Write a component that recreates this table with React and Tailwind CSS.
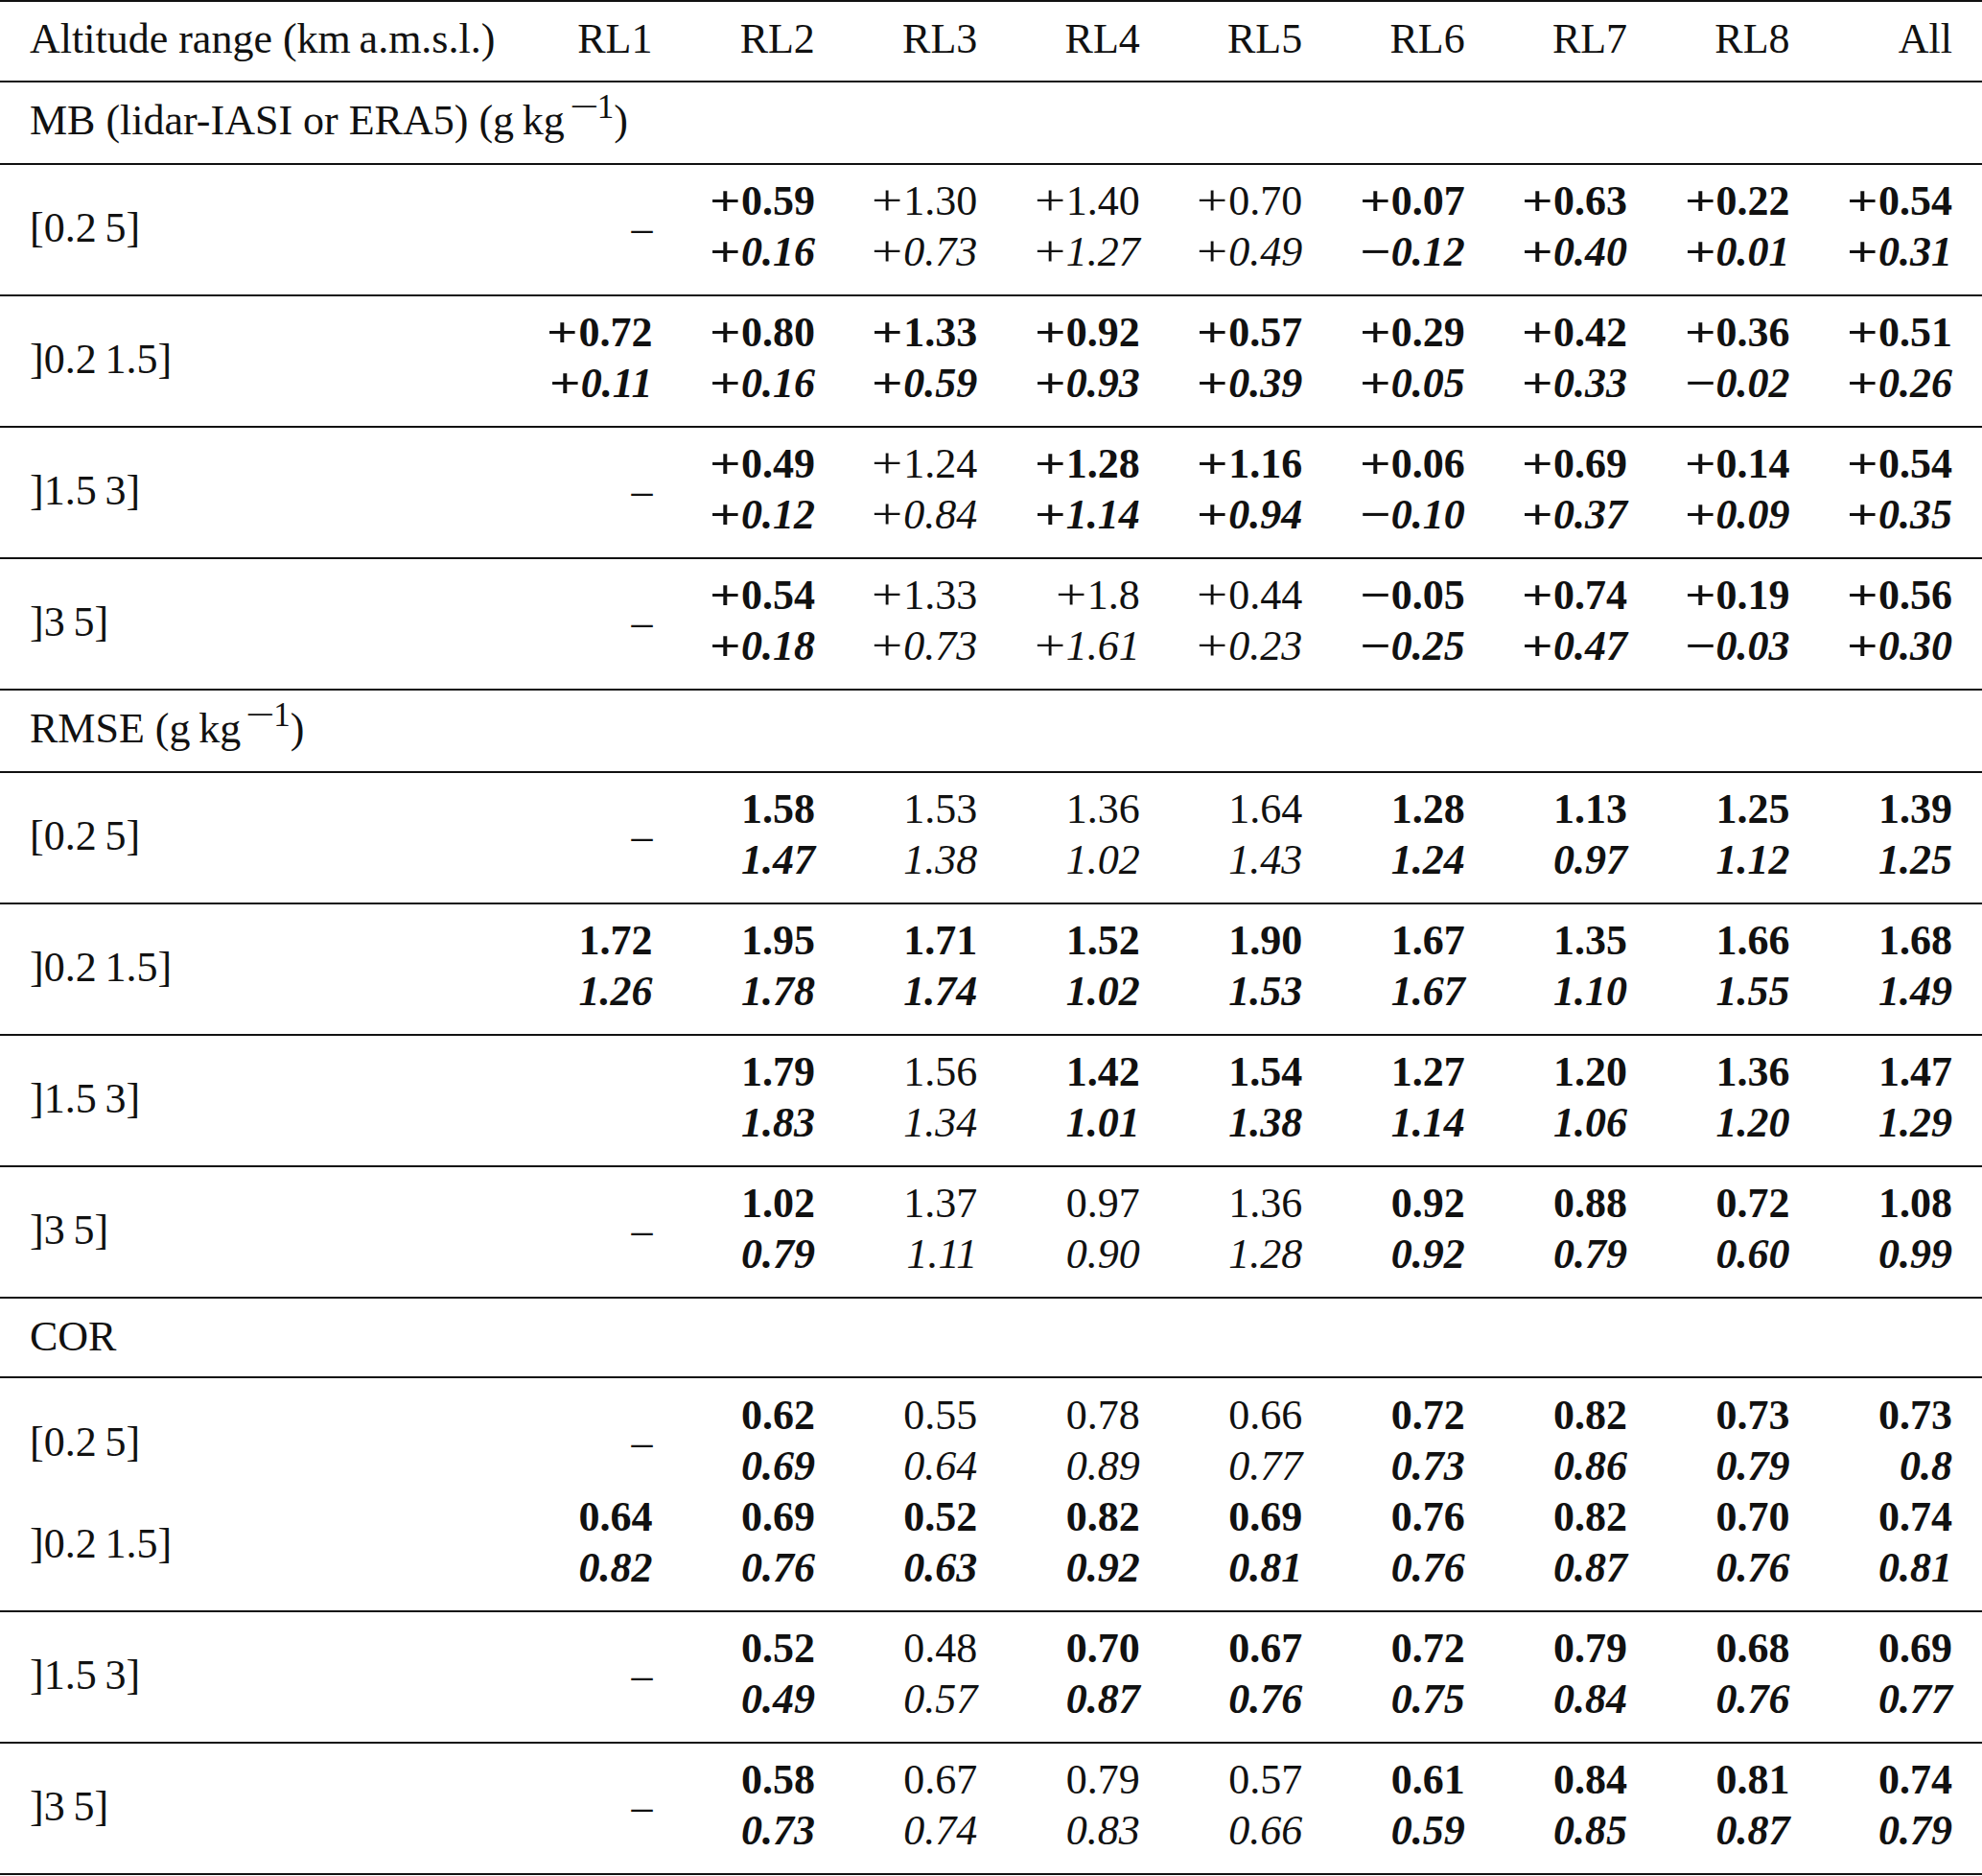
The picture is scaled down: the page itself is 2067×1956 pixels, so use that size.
import React from "react";

const cols = ["RL1", "RL2", "RL3", "RL4", "RL5", "RL6", "RL7", "RL8", "All"];

// each cell: [top, bottom, bold] | "-" (dash) | "" (empty)
const sections = [
  {
    title: "MB (lidar-IASI or ERA5) (g\u2009kg",
    unit: true,
    head: "pt-[13px] pb-[18px]",
    rows: [
      ["[0.2\u20095]", ["-", ["+0.59", "+0.16", 1], ["+1.30", "+0.73", 0], ["+1.40", "+1.27", 0], ["+0.70", "+0.49", 0], ["+0.07", "\u22120.12", 1], ["+0.63", "+0.40", 1], ["+0.22", "+0.01", 1], ["+0.54", "+0.31", 1]]],
      ["]0.2\u20091.5]", [["+0.72", "+0.11", 1], ["+0.80", "+0.16", 1], ["+1.33", "+0.59", 1], ["+0.92", "+0.93", 1], ["+0.57", "+0.39", 1], ["+0.29", "+0.05", 1], ["+0.42", "+0.33", 1], ["+0.36", "\u22120.02", 1], ["+0.51", "+0.26", 1]]],
      ["]1.5\u20093]", ["-", ["+0.49", "+0.12", 1], ["+1.24", "+0.84", 0], ["+1.28", "+1.14", 1], ["+1.16", "+0.94", 1], ["+0.06", "\u22120.10", 1], ["+0.69", "+0.37", 1], ["+0.14", "+0.09", 1], ["+0.54", "+0.35", 1]]],
      ["]3\u20095]", ["-", ["+0.54", "+0.18", 1], ["+1.33", "+0.73", 0], ["+1.8", "+1.61", 0], ["+0.44", "+0.23", 0], ["\u22120.05", "\u22120.25", 1], ["+0.74", "+0.47", 1], ["+0.19", "\u22120.03", 1], ["+0.56", "+0.30", 1]]],
    ],
  },
  {
    title: "RMSE (g\u2009kg",
    unit: true,
    head: "pt-[13px] pb-[18px]",
    rows: [
      ["[0.2\u20095]", ["-", ["1.58", "1.47", 1], ["1.53", "1.38", 0], ["1.36", "1.02", 0], ["1.64", "1.43", 0], ["1.28", "1.24", 1], ["1.13", "0.97", 1], ["1.25", "1.12", 1], ["1.39", "1.25", 1]]],
      ["]0.2\u20091.5]", [["1.72", "1.26", 1], ["1.95", "1.78", 1], ["1.71", "1.74", 1], ["1.52", "1.02", 1], ["1.90", "1.53", 1], ["1.67", "1.67", 1], ["1.35", "1.10", 1], ["1.66", "1.55", 1], ["1.68", "1.49", 1]]],
      ["]1.5\u20093]", ["", ["1.79", "1.83", 1], ["1.56", "1.34", 0], ["1.42", "1.01", 1], ["1.54", "1.38", 1], ["1.27", "1.14", 1], ["1.20", "1.06", 1], ["1.36", "1.20", 1], ["1.47", "1.29", 1]]],
      ["]3\u20095]", ["-", ["1.02", "0.79", 1], ["1.37", "1.11", 0], ["0.97", "0.90", 0], ["1.36", "1.28", 0], ["0.92", "0.92", 1], ["0.88", "0.79", 1], ["0.72", "0.60", 1], ["1.08", "0.99", 1]]],
    ],
  },
  {
    title: "COR",
    unit: false,
    joinFirst: true,
    head: "pt-[13px] pb-[15px]",
    rows: [
      ["[0.2\u20095]", ["-", ["0.62", "0.69", 1], ["0.55", "0.64", 0], ["0.78", "0.89", 0], ["0.66", "0.77", 0], ["0.72", "0.73", 1], ["0.82", "0.86", 1], ["0.73", "0.79", 1], ["0.73", "0.8", 1]]],
      ["]0.2\u20091.5]", [["0.64", "0.82", 1], ["0.69", "0.76", 1], ["0.52", "0.63", 1], ["0.82", "0.92", 1], ["0.69", "0.81", 1], ["0.76", "0.76", 1], ["0.82", "0.87", 1], ["0.70", "0.76", 1], ["0.74", "0.81", 1]]],
      ["]1.5\u20093]", ["-", ["0.52", "0.49", 1], ["0.48", "0.57", 0], ["0.70", "0.87", 1], ["0.67", "0.76", 1], ["0.72", "0.75", 1], ["0.79", "0.84", 1], ["0.68", "0.76", 1], ["0.69", "0.77", 1]]],
      ["]3\u20095]", ["-", ["0.58", "0.73", 1], ["0.67", "0.74", 0], ["0.79", "0.83", 0], ["0.57", "0.66", 0], ["0.61", "0.59", 1], ["0.84", "0.85", 1], ["0.81", "0.87", 1], ["0.74", "0.79", 1]]],
    ],
  },
];

const grid = "grid grid-cols-[480px_repeat(9,minmax(0,1fr))] px-[31px]";

// math-style sign, a bit wider than the text glyph
function Sign({ s }) {
  return (
    <span className="inline-block w-[33px] not-italic">
      <span className="inline-block origin-left scale-x-[1.3]">{s}</span>
    </span>
  );
}

function Num({ v, italic }) {
  const hasSign = v[0] === "+" || v[0] === "\u2212";
  const rest = hasSign ? v.slice(1) : v;
  return (
    <div className="whitespace-nowrap">
      {hasSign && <Sign s={v[0]} />}
      <span className={italic ? "italic" : ""}>{rest}</span>
    </div>
  );
}

function Cell({ cell }) {
  if (cell === "-") {
    return <div className="flex items-center justify-end pt-[3px]">–</div>;
  }
  if (cell === "") return <div />;
  const [top, bottom, bold] = cell;
  return (
    <div className={"flex flex-col items-end " + (bold ? "font-bold" : "")}>
      <Num v={top} />
      <Num v={bottom} italic />
    </div>
  );
}

function DataRow({ label, cells, pos }) {
  // pos: "single" | "first" | "last"
  let cls = "pt-[11px] pb-[18px] border-b-2 border-[#111]";
  if (pos === "first") cls = "pt-[12px]";
  if (pos === "last") cls = "pb-[18px] border-b-2 border-[#111]";
  return (
    <div className={grid + " " + cls}>
      <div className="flex items-center whitespace-nowrap pt-[3px]">{label}</div>
      {cells.map((c, i) => (
        <Cell key={i} cell={c} />
      ))}
    </div>
  );
}

function Unit() {
  return (
    <>
      <sup className="text-[35px] ml-[5px]">
        <span className="inline-block w-[29px]">
          <span className="inline-block origin-left scale-x-[1.55]">{"\u2212"}</span>
        </span>
        1
      </sup>
      )
    </>
  );
}

export default function App() {
  return (
    <div className="w-[2067px] bg-white text-[#111] font-['Liberation_Serif','Times_New_Roman',serif] text-[44px] leading-[53px]">
      <div className={grid + " border-t-2 border-b-2 border-[#111] pt-[12px] pb-[17px]"}>
        <div className="whitespace-nowrap">Altitude range (km{"\u2009"}a.m.s.l.)</div>
        {cols.map((c) => (
          <div key={c} className="text-right">
            {c}
          </div>
        ))}
      </div>

      {sections.map((s) => (
        <div key={s.title}>
          <div className={"px-[31px] border-b-2 border-[#111] whitespace-nowrap " + s.head}>
            {s.title}
            {s.unit && <Unit />}
          </div>
          {s.rows.map(([label, cells], i) => {
            let pos = "single";
            if (s.joinFirst && i === 0) pos = "first";
            if (s.joinFirst && i === 1) pos = "last";
            return <DataRow key={i} label={label} cells={cells} pos={pos} />;
          })}
        </div>
      ))}
    </div>
  );
}
